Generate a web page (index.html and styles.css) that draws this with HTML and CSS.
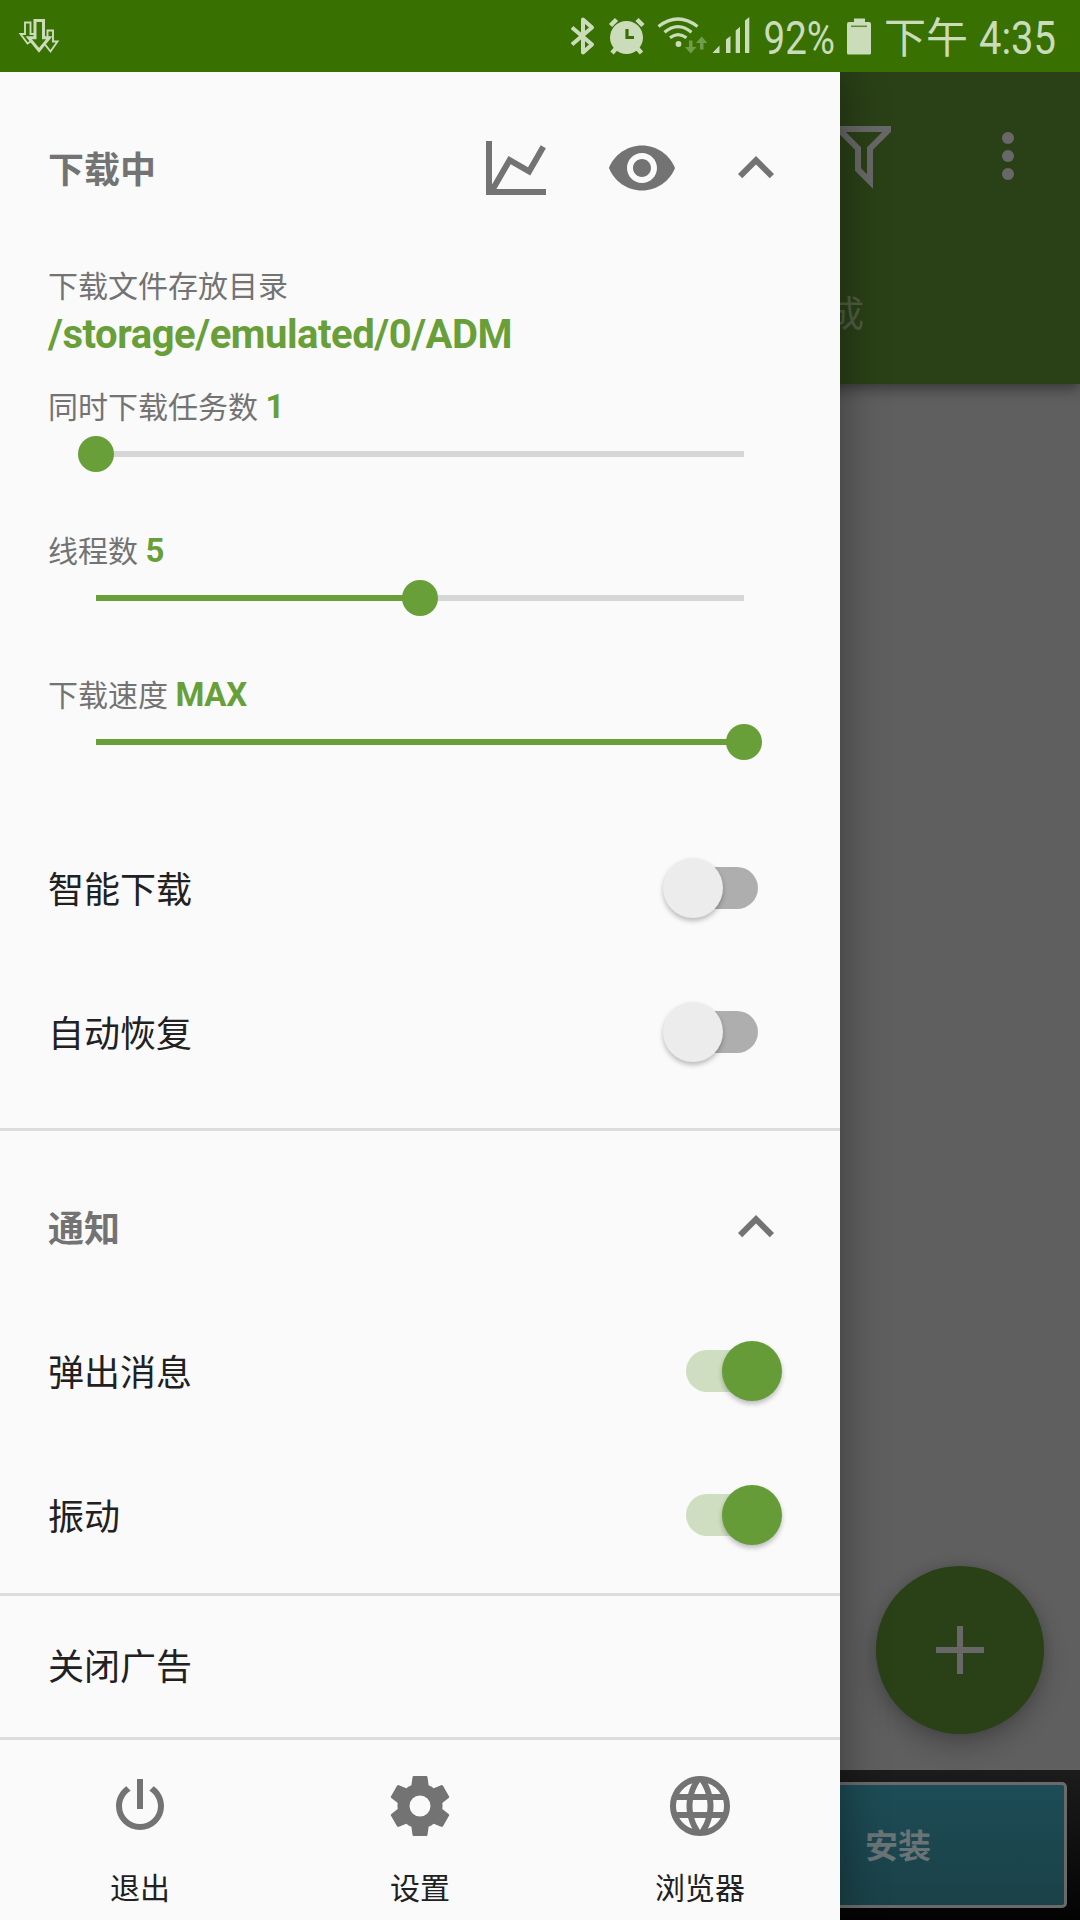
FILE: index.html
```html
<!DOCTYPE html>
<html lang="zh-CN">
<head>
<meta charset="utf-8">
<title>ADM</title>
<link rel="stylesheet" href="styles.css">
</head>
<body>
<div class="screen">
  <header class="status">
    <svg class="status-art" width="1080" height="72" viewBox="0 0 1080 72">
      <g fill="none" stroke="#cbdcbb">
        <path stroke-width="1.900" d="M33 40L27.500 43.500L20.500 34H25V22.500H30.500V34H34"/>
        <path stroke-width="1.900" d="M47.500 41V30.500H53V41.500H57.500L50.500 51.500L43.500 42.500"/>
        <path stroke-width="3" d="M35 20.500H43.500V37.800H49.300L39 50.300L28.700 37.800H35Z" fill="#387002"/>
        <path stroke-width="4" stroke-linejoin="round" d="M572 27.500L592 44.500L583 52.500V19.500L592 27.500L572 44.500"/>
        <g stroke-width="3.200">
          <path d="M658.500 26.500Q678 11.500 697.500 26.500"/>
          <path d="M664.500 32.200Q678 21 691.500 32.200"/>
          <path d="M670 37.800Q678 31.500 686.500 37.800"/>
        </g>
        <path stroke-width="4.500" d="M610.500 25.500L616.500 19.500M643 25.500L637 19.500M616.500 48L612 53M637 48L641.500 53"/>
      </g>
      <g fill="#cbdcbb">
        <circle cx="626.500" cy="37.500" r="16.500"/>
        <circle cx="678.500" cy="44" r="2.900"/>
        <path d="M712.500 53L719.500 45.500V53ZM726 53V39.500L730.500 36V53ZM735.700 53V30.500L740 26.700V53ZM745 53V20.500L749.300 17V53Z"/>
        <path d="M849 22H854V18.500H865V22H869Q871 22 871 24V53Q871 54.500 869.500 54.500H848.500Q847 54.500 847 53V24Q847 22 849 22Z"/>
      </g>
      <path d="M627 29V37.500H634" stroke="#387002" stroke-width="3.200" fill="none"/>
      <path d="M851 26.300H867" stroke="#5f8c35" stroke-width="1.500"/>
      <path d="M689 40.500H692.500V47H696.500L690.700 53.500L685 47H689ZM700 49.500H703.500V43H707.300L701.700 36.500L696 43H700Z" fill="#719c4c"/>
      <g class="status-text">
        <text x="763.500" y="53.500" textLength="71.500" lengthAdjust="spacingAndGlyphs">92%</text>
        <text class="cjk" x="884" y="53">下午</text>
        <text x="979" y="53.500" textLength="77" lengthAdjust="spacingAndGlyphs">4:35</text>
      </g>
    </svg>
  </header>
  <div class="stage">
    <main class="app">
      <div class="appbar">
        <div class="toolbar">
          <svg class="icon" viewBox="0 0 24 24"><path d="M3,2H21V4H20.920L15,9.920V22.910L9,16.910V9.910L3.090,4H3V2M11,16.080L13,18.080V9H13.090L18.090,4H5.920L10.920,9H11V16.080Z"/></svg>
          <svg class="icon" viewBox="0 0 24 24"><circle cx="12" cy="6" r="2"/><circle cx="12" cy="12" r="2"/><circle cx="12" cy="18" r="2"/></svg>
        </div>
        <div class="tabs">成</div>
      </div>
      <div class="content">
        <div class="fab"><svg class="icon" viewBox="0 0 24 24"><path d="M4 11H11V4H13V11H20V13H13V20H11V13H4Z"/></svg></div>
      </div>
      <div class="ad"><div class="install">安装</div></div>
    </main>
    <aside class="drawer">
      <section class="section">
        <div class="head">
          <h2>下载中</h2>
          <svg class="icon chart" viewBox="0 0 24 24"><path d="M16,11.780L20.240,4.450L21.970,5.450L16.740,14.500L10.230,10.750L5.460,19H22V21H2V3H4V17.540L9.500,8L16,11.780Z"/></svg>
          <svg class="icon eye" viewBox="0 0 24 24"><path d="M12 4.500C7 4.500 2.730 7.610 1 12c1.730 4.390 6 7.500 11 7.500s9.270-3.110 11-7.500c-1.730-4.390-6-7.500-11-7.500zM12 17c-2.760 0-5-2.240-5-5s2.240-5 5-5 5 2.240 5 5-2.240 5-5 5zm0-8c-1.660 0-3 1.340-3 3s1.340 3 3 3 3-1.340 3-3-1.340-3-3-3z"/></svg>
          <svg class="icon" viewBox="0 0 24 24"><path d="M12 8l-6 6 1.410 1.410L12 10.830l4.590 4.580L18 14z"/></svg>
        </div>
        <div class="folder"><div class="label">下载文件存放目录</div><div class="path">/storage/emulated/0/ADM</div></div>
        <div class="slider"><div class="label">同时下载任务数 <b>1</b></div><div class="track"><i class="fill" style="width:0%"></i><i class="knob"></i></div></div>
        <div class="slider"><div class="label">线程数 <b>5</b></div><div class="track"><i class="fill" style="width:50%"></i><i class="knob"></i></div></div>
        <div class="slider"><div class="label">下载速度 <b>MAX</b></div><div class="track"><i class="fill" style="width:100%"></i><i class="knob"></i></div></div>
        <div class="row"><span class="name">智能下载</span><span class="switch"><i></i></span></div>
        <div class="row"><span class="name">自动恢复</span><span class="switch"><i></i></span></div>
      </section>
      <section class="section notify">
        <div class="head">
          <h2>通知</h2>
          <svg class="icon" viewBox="0 0 24 24"><path d="M12 8l-6 6 1.410 1.410L12 10.830l4.590 4.580L18 14z"/></svg>
        </div>
        <div class="row"><span class="name">弹出消息</span><span class="switch on"><i></i></span></div>
        <div class="row"><span class="name">振动</span><span class="switch on"><i></i></span></div>
      </section>
      <div class="row remove-ads">关闭广告</div>
      <nav class="footer">
        <div class="action"><svg class="icon" viewBox="0 0 24 24"><path d="M16.560,5.440L15.110,6.890C16.840,7.940 18,9.830 18,12A6,6 0 0,1 12,18A6,6 0 0,1 6,12C6,9.830 7.160,7.940 8.880,6.880L7.440,5.440C5.360,6.880 4,9.280 4,12A8,8 0 0,0 12,20A8,8 0 0,0 20,12C20,9.280 18.640,6.880 16.560,5.440M13,3H11V13H13"/></svg>退出</div>
        <div class="action"><svg class="icon" viewBox="0 0 24 24"><path d="M12,15.500A3.500,3.500 0 0,1 8.500,12A3.500,3.500 0 0,1 12,8.500A3.500,3.500 0 0,1 15.500,12A3.500,3.500 0 0,1 12,15.500M19.430,12.970C19.470,12.650 19.500,12.330 19.500,12C19.500,11.670 19.470,11.340 19.430,11L21.540,9.370C21.730,9.220 21.780,8.950 21.660,8.730L19.660,5.270C19.540,5.050 19.270,4.960 19.050,5.050L16.560,6.050C16.040,5.660 15.500,5.320 14.870,5.070L14.500,2.420C14.460,2.180 14.250,2 14,2H10C9.750,2 9.540,2.180 9.500,2.420L9.130,5.070C8.500,5.320 7.960,5.660 7.440,6.050L4.950,5.050C4.730,4.960 4.460,5.050 4.340,5.270L2.340,8.730C2.210,8.950 2.270,9.220 2.460,9.370L4.570,11C4.530,11.340 4.500,11.670 4.500,12C4.500,12.330 4.530,12.650 4.570,12.970L2.460,14.630C2.270,14.780 2.210,15.050 2.340,15.270L4.340,18.730C4.460,18.950 4.730,19.030 4.950,18.950L7.440,17.940C7.960,18.340 8.500,18.680 9.130,18.930L9.500,21.580C9.540,21.820 9.750,22 10,22H14C14.250,22 14.460,21.820 14.500,21.580L14.870,18.930C15.500,18.670 16.040,18.340 16.560,17.940L19.050,18.950C19.270,19.030 19.540,18.950 19.660,18.730L21.660,15.270C21.780,15.050 21.730,14.780 21.540,14.630L19.430,12.970Z"/></svg>设置</div>
        <div class="action"><svg class="icon" viewBox="0 0 24 24"><path d="M11.990 2C6.470 2 2 6.480 2 12s4.470 10 9.990 10C17.520 22 22 17.520 22 12S17.520 2 11.990 2zm6.930 6h-2.950c-.320-1.250-.780-2.450-1.380-3.560 1.840.630 3.370 1.910 4.330 3.560zM12 4.040c.830 1.200 1.480 2.530 1.910 3.960h-3.820c.430-1.430 1.080-2.760 1.910-3.960zM4.260 14C4.100 13.360 4 12.690 4 12s.100-1.360.260-2h3.380c-.080.660-.140 1.320-.140 2 0 .680.060 1.340.140 2H4.260zm.820 2h2.950c.320 1.250.780 2.450 1.380 3.560-1.840-.630-3.370-1.900-4.330-3.560zm2.950-8H5.080c.960-1.660 2.490-2.930 4.330-3.560C8.810 5.550 8.350 6.750 8.030 8zM12 19.960c-.830-1.200-1.480-2.530-1.910-3.960h3.820c-.430 1.430-1.080 2.760-1.910 3.960zM14.340 14H9.660c-.090-.660-.160-1.320-.160-2 0-.680.070-1.350.160-2h4.680c.090.650.160 1.320.160 2 0 .680-.070 1.340-.160 2zm.250 5.560c.600-1.110 1.060-2.310 1.380-3.560h2.950c-.960 1.650-2.490 2.930-4.330 3.560zM16.360 14c.080-.660.140-1.320.140-2 0-.680-.060-1.340-.140-2h3.380c.160.640.260 1.310.260 2s-.100 1.360-.260 2h-3.380z"/></svg>浏览器</div>
      </nav>
    </aside>
  </div>
</div>
</body>
</html>
```
FILE: styles.css
```css
* { box-sizing: border-box; }
body { margin: 0; font-family: Roboto, "Noto Sans CJK SC", sans-serif; }
.screen { width: 1080px; height: 1920px; overflow: hidden; display: flex; flex-direction: column; }
.status { height: 72px; background: #387002; }
.status-art { display: block; }
.status-text { font-family: Roboto, "Noto Sans CJK SC", sans-serif; font-size: 46px; fill: #cbdcbb; }
.status-text .cjk { font-size: 42px; }

/* the app page and the drawer share one grid cell */
.stage { flex: 1; display: grid; grid-template: 1848px / 1080px; overflow: hidden; }
.app, .drawer { grid-area: 1 / 1; }
.icon { width: 72px; height: 72px; display: block; flex: none; fill: currentColor; }

.app { display: flex; flex-direction: column; background: #5f5f5f; color: #686868; }
.appbar { height: 312px; background: #2a4017; box-shadow: 0 4px 14px rgba(0,0,0,.45); }
.toolbar { height: 168px; padding: 0 36px; display: flex; align-items: center; justify-content: flex-end; gap: 72px; }
.tabs { height: 144px; padding-left: 828px; font-size: 36px; line-height: 151px; color: #4f5c44; }
.content { flex: 1; display: flex; align-items: flex-end; justify-content: flex-end; padding: 36px; }
.fab { width: 168px; height: 168px; border-radius: 50%; background: #2a4017; display: grid; place-items: center; box-shadow: 0 12px 24px rgba(0,0,0,.22), 0 0 12px rgba(0,0,0,.12); }
.ad { height: 150px; padding: 12px 13px 12px 600px; background: linear-gradient(#1c1c1c, #030303); }
.install { height: 126px; border: 3px solid #6a6a6a; border-radius: 5px; background: linear-gradient(#1d4c57, #1a4147); padding-left: 262px; font-size: 33px; font-weight: 700; line-height: 124px; color: #6a7476; }

.drawer { width: 840px; background: #fafafa; color: #212121; box-shadow: 0 0 42px rgba(0,0,0,.4); z-index: 1; display: flex; flex-direction: column; }
.section { padding-top: 24px; border-bottom: 3px solid #dcdcdc; height: 1059px; }
.notify { height: 465px; }
.head { height: 144px; padding: 0 48px; display: flex; align-items: center; color: #737373; }
.head h2 { margin: 0 auto 0 0; padding-top: 5px; font-size: 36px; font-weight: 700; line-height: 54px; }
.chart { margin-right: 54px; }
.eye { margin-right: 42px; }
.label { font-size: 30px; line-height: 44px; color: #737373; }
.label b { color: #689f38; font-size: 33px; letter-spacing: -.3px; }
.folder { height: 144px; padding: 25px 48px 0; }
.path { font-size: 40px; line-height: 48px; margin-top: 2px; font-weight: 700; letter-spacing: -.45px; color: #689f38; }
.slider { height: 144px; padding: 1px 48px 0; }
.track { width: 648px; height: 6px; margin: 21px 0 0 48px; background: #d6d6d6; display: flex; align-items: center; }
.fill { height: 6px; background: #689f38; flex: none; }
.knob { width: 36px; height: 36px; border-radius: 50%; background: #689f38; margin-left: -18px; flex: none; }
.row { height: 144px; padding: 0 48px; display: flex; align-items: center; justify-content: space-between; font-size: 36px; }
.name { padding-bottom: 2px; }
.switch { width: 72px; height: 42px; margin-right: 34px; border-radius: 21px; background: #aeaeae; display: flex; align-items: center; flex: none; }
.switch i { width: 60px; height: 60px; border-radius: 50%; background: #ececec; flex: none; margin-left: -23px; box-shadow: 0 3px 5px rgba(0,0,0,.25); }
.switch.on { background: #cfdec0; }
.switch.on i { background: #669c37; margin-left: 35.500px; }
.remove-ads { height: 144px; padding-bottom: 5px; border-bottom: 3px solid #dcdcdc; }
.footer { flex: 1; display: grid; grid-template-columns: repeat(3, 280px); }
.action { padding-top: 30px; display: flex; flex-direction: column; align-items: center; font-size: 30px; line-height: 44px; gap: 25px; }
.action .icon { fill: #737373; }
```
